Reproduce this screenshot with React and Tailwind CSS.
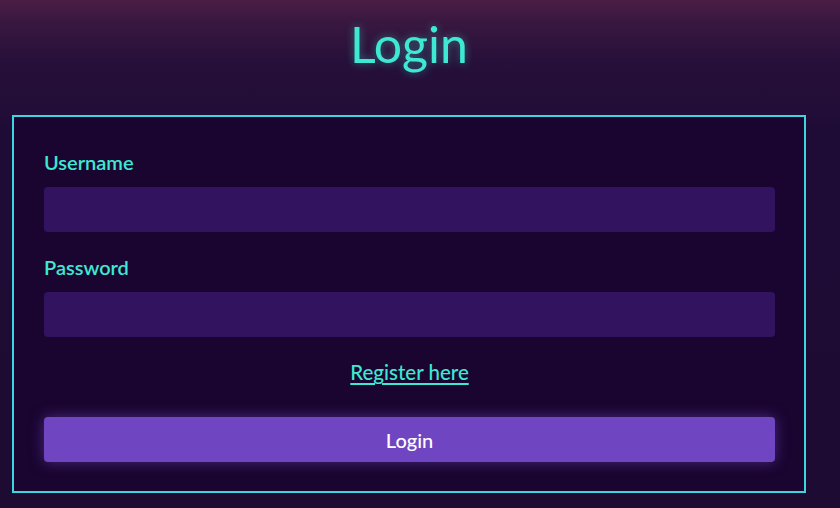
export default function App() {
  return (
    <div
      className="w-[840px] h-[508px] overflow-hidden bg-[linear-gradient(180deg,#4b1d45_0px,#3a1840_20px,#27103a_60px,#1f0c36_130px,#1d0b33_508px)]"
      style={{ fontFamily: "Lato, 'Noto Sans', sans-serif" }}
    >
      <div className="w-[818px] flex flex-col items-center pt-[14px]">
        <h1 className="text-[50px] leading-[60px] font-normal text-[#3ee8d2] [text-shadow:0_0_8px_rgba(62,232,210,0.45)]">
          Login
        </h1>
      </div>
      <div className="ml-[12px] mt-[41px] w-[794px] h-[378px] border-2 border-[#3dd6e0] bg-[#1a0530] px-[30px] pt-[31px] flex flex-col">
        <label className="text-[20px] leading-[28px] font-semibold text-[#3ee8d2]">Username</label>
        <div className="mt-[11px] h-[45px] w-[731px] rounded-[4px] bg-[#311360]" />
        <label className="mt-[21px] text-[20px] leading-[28px] font-semibold text-[#3ee8d2]">Password</label>
        <div className="mt-[11px] h-[45px] w-[731px] rounded-[4px] bg-[#311360]" />
        <div className="mt-[21px] w-[731px] flex justify-center">
          <a className="text-[20.5px] leading-[28px] font-medium text-[#3ee8d2] underline underline-offset-[3px] decoration-2">Register here</a>
        </div>
        <button className="mt-[31px] h-[45px] w-[731px] rounded-[4px] bg-[#6f45c2] text-white text-[20px] font-medium shadow-[0_0_14px_rgba(111,69,194,0.55)]">
          Login
        </button>
      </div>
    </div>
  );
}
